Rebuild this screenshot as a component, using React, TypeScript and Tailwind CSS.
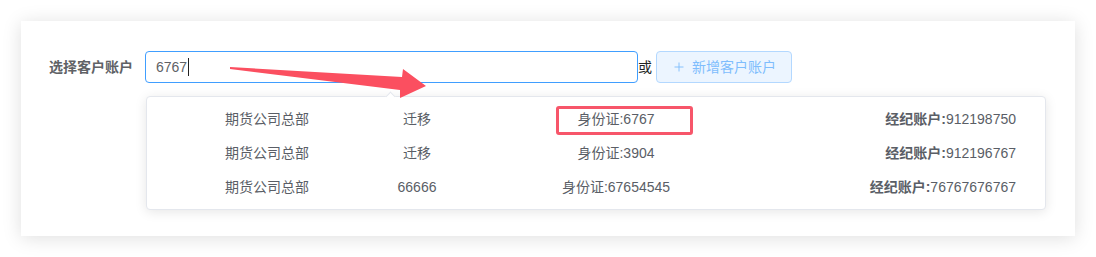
import { Plus } from "lucide-react";

const rows = [
  { org: "期货公司总部", type: "迁移", id: "6767", acct: "912198750" },
  { org: "期货公司总部", type: "迁移", id: "3904", acct: "912196767" },
  { org: "期货公司总部", type: "66666", id: "67654545", acct: "76767676767" },
];

export default function App() {
  return (
    <div
      className="relative w-[1096px] h-[257px] bg-white pt-[21px] pl-[21px]"
      style={{ fontFamily: '"Liberation Sans", "Noto Sans CJK SC", sans-serif' }}
    >
      <div className="relative w-[1054px] h-[215px] bg-white shadow-[0_2px_18px_rgba(0,0,0,0.13)] pt-[30px] pl-[28px]">
        <div className="flex items-center h-[32px]">
          <span className="w-[96px] text-[14px] font-bold text-[#606266]">选择客户账户</span>
          <div className="w-[493px] h-[32px] rounded-[4px] border border-[#409eff] flex items-center pl-[10px] text-[14px] text-[#606266]">
            6767
            <span className="ml-[1px] w-px h-[18px] bg-[#222]" />
          </div>
          <span className="w-[18px] text-[14px] text-[#222] leading-none">或</span>
          <button className="w-[136px] h-[32px] rounded-[4px] border border-[#b3d8ff] bg-[#ecf5ff] flex items-center justify-center gap-[6px] text-[14px] text-[#7fbdfd]">
            <Plus size={14} strokeWidth={1.6} />
            新增客户账户
          </button>
        </div>

        {/* dropdown */}
        <div className="absolute left-[125px] top-[75px] w-[900px] rounded-[4px] border border-[#e4e7ed] bg-white shadow-[0_2px_12px_rgba(0,0,0,0.1)] py-[5px] text-[14px] text-[#5a5e66]">
          <div className="absolute -top-[4px] left-[240px] w-[7px] h-[7px] rotate-45 bg-white border-l border-t border-[#e4e7ed]" />
          {rows.map((r, i) => (
            <div key={i} className="grid grid-cols-[240px_60px_338px_231px] h-[34px] items-center">
              <span className="text-center">{r.org}</span>
              <span className="text-center">{r.type}</span>
              <span className="text-center">身份证:{r.id}</span>
              <span className="text-right whitespace-nowrap">
                <b className="font-bold">经纪账户:</b>
                {r.acct}
              </span>
            </div>
          ))}
          <div className="absolute left-[409px] top-[9px] w-[137px] h-[29px] rounded-[3px] border-[3px] border-[#f7566a]" />
        </div>
      </div>

      <svg className="absolute left-0 top-0 pointer-events-none" width="1096" height="257">
        <polygon
          points="230,67 402,77 403,69 426,86 400,98 400,90 230,69"
          fill="#fb4f60"
        />
      </svg>
    </div>
  );
}
